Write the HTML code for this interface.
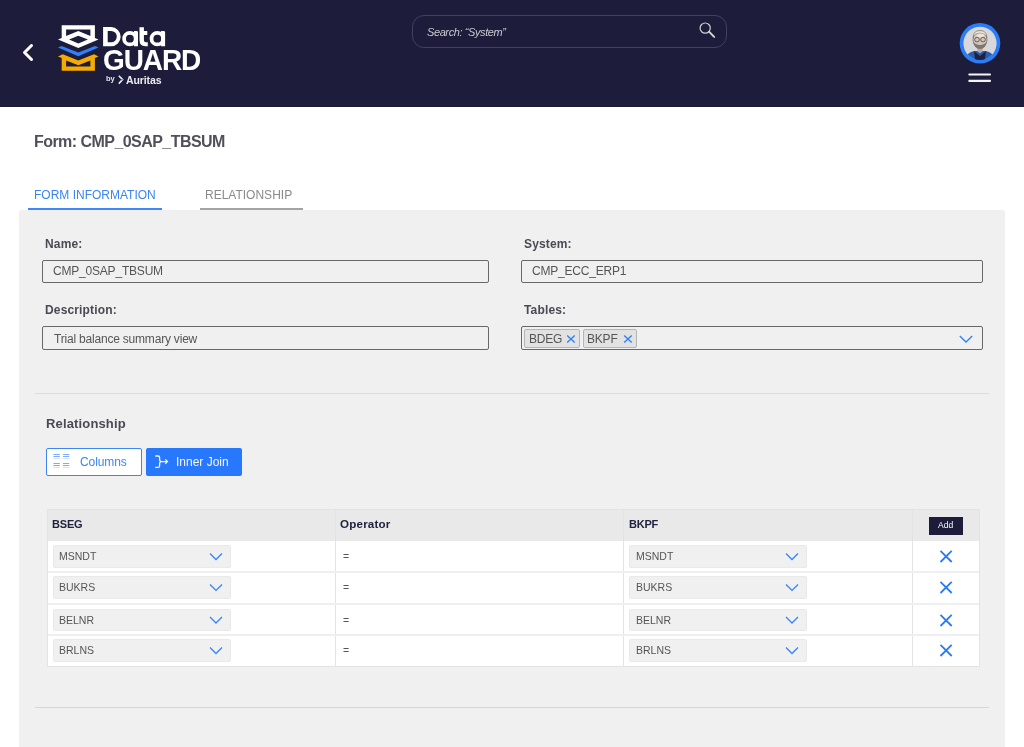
<!DOCTYPE html>
<html><head><meta charset="utf-8">
<style>
*{box-sizing:border-box;margin:0;padding:0}
html,body{width:1024px;height:747px;overflow:hidden;background:#fff;font-family:"Liberation Sans",sans-serif}
.t{will-change:transform}
.a{position:absolute}
.t{position:absolute;line-height:1;white-space:nowrap}
#hdr{left:0;top:0;width:1024px;height:107px;background:#1d1d3b;border-bottom:1px solid #19193a}
#panel{left:19px;top:210px;width:986px;height:560px;background:#f0f0f0;border-radius:3px 3px 0 0}
.lbl{font-size:12px;font-weight:bold;color:#4a4a55;letter-spacing:0.15px}
.inp{position:absolute;height:23.6px;border:1px solid #686868;border-radius:2px;background:#f0f0f0}
.itx{font-size:12px;color:#555;letter-spacing:-0.2px}
.hr{position:absolute;height:1px;background:#dcdcdc}
.btn{position:absolute;top:448px;height:28px;width:96px;border-radius:2px}
.th{font-size:11.6px;font-weight:bold;color:#20223f}
.sel{position:absolute;height:22.4px;width:178px;background:#f0f0f0;border:1px solid #e9e9e9;border-radius:2px}
.stx{font-size:10.5px;color:#555}
</style></head><body>
<div id="hdr" class="a"></div>
<!-- back chevron -->
<svg class="a" style="left:0;top:0" width="240" height="107" viewBox="0 0 240 107">
  <polyline points="31.5,45.5 24.5,52.5 31.5,59.5" fill="none" stroke="#fff" stroke-width="3" stroke-linecap="round" stroke-linejoin="round"/>
  <path fill="#fff" fill-rule="evenodd" d="M61.7,25.2 H94.9 V37.9 L98.5,39.5 L78.3,48 L58,39.5 L61.7,37.9 Z M66.1,29.6 H90.4 V36.1 L78.3,31 L66.1,36.1 Z M69.1,39.5 L78.3,35.8 L87.9,39.5 L78.3,43.6 Z"/>
  <path fill="#2f80fa" d="M58,47.6 L61.5,46 L78.3,52.4 L95,46 L98.5,47.6 L78.3,56.2 Z"/>
  <path fill="#f5ab00" fill-rule="evenodd" d="M58,56.4 L62.8,54.2 L78.3,60.5 L94.1,54.2 L98.5,56.4 L94.9,57.9 V70.8 H61.7 V57.9 Z M66.1,60.6 L78.3,65.2 L90.4,60.6 V66.4 H66.1 Z"/>
</svg>
<svg class="a" style="left:0;top:0" width="240" height="60" viewBox="0 0 240 60"><g fill="#fff">
  <path fill-rule="evenodd" d="M103.1,27.1 H111.1 A9.55,9.55 0 0 1 111.1,46.2 H103.1 Z M107.7,30.9 H111.1 A5.7,5.7 0 0 1 111.1,42.3 H107.7 Z"/>
  <circle cx="129.9" cy="38.65" r="5.8" fill="none" stroke="#fff" stroke-width="3.75"/>
  <path d="M134,31 H136.6 Q138,31 138,32.4 V46.2 H134 Z"/>
  <path d="M139.5,27.2 H143.9 V31.1 H147.3 V35 H143.9 V40.3 Q143.9,42.3 145.9,42.3 H147.8 V46.2 H145.4 Q139.5,46.2 139.5,40.3 Z"/>
  <circle cx="157.3" cy="38.65" r="5.8" fill="none" stroke="#fff" stroke-width="3.75"/>
  <path d="M161.1,31 H163.7 Q165.1,31 165.1,32.4 V46.2 H161.1 Z"/>
</g></svg>
<div class="t" style="left:103px;top:46px;font-size:28px;font-weight:bold;color:#fff;letter-spacing:-1.1px;transform:scaleY(1.055);transform-origin:0 0">GUARD</div>
<div class="t" style="left:105.5px;top:75px;font-size:7.5px;font-weight:bold;color:#e6e6ea;letter-spacing:-0.2px">by</div>
<svg class="a" style="left:116px;top:74px" width="10" height="12"><polyline points="2.8,1.8 6.6,5.6 2.8,9.6" fill="none" stroke="#f0f0f4" stroke-width="1.6"/><circle cx="6" cy="5.6" r="0.9" fill="#3a86ff"/></svg>
<div class="t" style="left:126px;top:75.2px;font-size:10.5px;font-weight:bold;color:#ececf0;letter-spacing:-0.1px">Auritas</div>

<!-- search -->
<div class="a" style="left:411.5px;top:15.4px;width:315.6px;height:32.2px;border:1px solid #404064;border-radius:12px"></div>
<div class="t" style="left:427px;top:26.5px;font-size:11px;font-style:italic;color:#c9c9d2;letter-spacing:-0.4px">Search: “System”</div>
<svg class="a" style="left:690px;top:15px" width="40" height="33">
  <circle cx="15.2" cy="13.1" r="5.1" fill="none" stroke="#d0d0d6" stroke-width="1.2"/>
  <path d="M18.8,16.9 L23.8,22 L24.6,22.3 L24.2,21.4 L19.3,16.4 Z" fill="#d6d6dc" stroke="#d6d6dc" stroke-width="1.1" stroke-linejoin="round"/>
</svg>
<!-- avatar -->
<svg class="a" style="left:955px;top:18px" width="50" height="50">
  <circle cx="25" cy="25.3" r="20.3" fill="#2a7df6"/>
  <circle cx="25" cy="25.3" r="16.6" fill="#d8d8db"/>
  <clipPath id="cp"><circle cx="25" cy="25.3" r="16.6"/></clipPath>
  <g clip-path="url(#cp)">
    <path d="M7,45 Q10,35.5 19,33 L31,33 Q40,35.5 43,45 Z" fill="#2b5cab"/>
    <path d="M19,33 L25,38 L31,33 L29.5,45 L20.5,45 Z" fill="#1d2342"/>
    <path d="M22,28.5 L28,28.5 L27.6,33.2 L25,35.2 L22.4,33.2 Z" fill="#b8ada5"/>
    <ellipse cx="25" cy="21.6" rx="7" ry="8.9" fill="#cfc6bf" stroke="#6e6256" stroke-width="0.7"/>
    <path d="M18.2,19.5 Q18,12.6 25,12.6 Q32,12.6 31.8,19.5 Q31,15.4 25,15.2 Q19,15.4 18.2,19.5 Z" fill="#e9e6e3" stroke="#7a6e62" stroke-width="0.6"/>
    <ellipse cx="25.5" cy="17.4" rx="3.8" ry="2" fill="#f5decf"/>
    <path d="M18.8,24.2 Q19,30.6 25,30.8 Q31,30.6 31.2,24.2 Q29,27.4 25,27 Q21,27.4 18.8,24.2 Z" fill="#7e766f"/>
    <circle cx="22" cy="21.6" r="2.3" fill="none" stroke="#5a4a36" stroke-width="0.8"/>
    <circle cx="28" cy="21.6" r="2.3" fill="none" stroke="#5a4a36" stroke-width="0.8"/>
  </g>
</svg>
<svg class="a" style="left:960px;top:68px" width="40" height="20"><rect x="8.3" y="5.4" width="22.7" height="2.1" rx="1" fill="#f4f4f6"/><rect x="8.3" y="11.8" width="22.7" height="2.1" rx="1" fill="#f4f4f6"/></svg>

<!-- title & tabs -->
<div class="t" style="left:34px;top:134.3px;font-size:16px;font-weight:bold;color:#50505b;letter-spacing:-0.55px">Form: CMP_0SAP_TBSUM</div>
<div class="t" style="left:33.5px;top:188.6px;font-size:12px;color:#3b84f6">FORM INFORMATION</div>
<div class="t" style="left:204.5px;top:188.6px;font-size:12px;color:#8a8a8a">RELATIONSHIP</div>

<div id="panel" class="a"></div>
<div class="a" style="left:28px;top:208px;width:134px;height:2px;background:#3f87f6"></div>
<div class="a" style="left:200px;top:208px;width:102.5px;height:2px;background:#a3a3a3"></div>

<!-- form fields -->
<div class="t lbl" style="left:45px;top:237.8px">Name:</div>
<div class="t lbl" style="left:524px;top:237.8px">System:</div>
<div class="inp" style="left:42px;top:259.6px;width:447px"></div>
<div class="inp" style="left:521px;top:259.6px;width:462px"></div>
<div class="t itx" style="left:53.3px;top:265.3px">CMP_0SAP_TBSUM</div>
<div class="t itx" style="left:532.3px;top:265.3px">CMP_ECC_ERP1</div>

<div class="t lbl" style="left:45px;top:304.2px">Description:</div>
<div class="t lbl" style="left:524px;top:304.2px">Tables:</div>
<div class="inp" style="left:42px;top:326.2px;width:447px;height:23.6px"></div>
<div class="inp" style="left:521px;top:326.2px;width:462px;height:23.6px"></div>
<div class="t itx" style="left:53.5px;top:332.5px">Trial balance summary view</div>

<div class="a" style="left:524px;top:329px;width:56px;height:18.5px;background:#e2e2e2;border:1px solid #b5b5b5;border-radius:2px"></div>
<div class="t itx" style="left:528.5px;top:332.6px">BDEG</div>
<svg class="a" style="left:565px;top:334px" width="11" height="10"><path d="M2.2,1.4 L9.7,8.6 M9.7,1.4 L2.2,8.6" stroke="#2f7ff5" stroke-width="1.35"/></svg>
<div class="a" style="left:582.7px;top:329px;width:54.5px;height:18.5px;background:#e2e2e2;border:1px solid #b5b5b5;border-radius:2px"></div>
<div class="t itx" style="left:586.5px;top:332.6px">BKPF</div>
<svg class="a" style="left:622px;top:334px" width="11" height="10"><path d="M2.2,1.4 L9.7,8.6 M9.7,1.4 L2.2,8.6" stroke="#2f7ff5" stroke-width="1.35"/></svg>
<svg class="a" style="left:958px;top:333px" width="16" height="11"><polyline points="1.8,3 8,9 14.2,3" fill="none" stroke="#2f7ff5" stroke-width="1.3"/></svg>

<div class="hr" style="left:35px;top:393px;width:954px"></div>

<!-- relationship -->
<div class="t" style="left:45.5px;top:417.4px;font-size:13px;font-weight:bold;color:#4a4a55;letter-spacing:0.15px">Relationship</div>
<div class="btn" style="left:46px;background:#fff;border:1px solid #3b86f7"></div>
<svg class="a" style="left:48px;top:450px" width="24" height="22">
  <g stroke-width="1">
    <path d="M5.4,4.5H11.8M5.4,6.5H11.8M15,4.5H21.2M15,6.5H21.2M5.4,13.5H11.8M5.4,15.5H11.8M15,13.5H21.2M15,15.5H21.2" stroke="#7eabf6"/>
    <path d="M5.4,8.5H11.8M15,8.5H21.2M5.4,17.5H11.8M15,17.5H21.2" stroke="#cfe0fb"/>
  </g>
</svg>
<div class="t" style="left:80.4px;top:455.7px;font-size:12px;color:#3b86f7;letter-spacing:-0.1px">Columns</div>
<div class="btn" style="left:146px;background:#2878fe"></div>
<svg class="a" style="left:150px;top:450px" width="24" height="22">
  <path d="M5.2,6 H8.1 Q9.6,6 9.6,7.6 V9.6 Q9.6,11.6 11.6,11.6 H17.3 M5.2,17.3 H8.1 Q9.6,17.3 9.6,15.7 V13.6 Q9.6,11.6 11.6,11.6 M15.3,9.4 L17.5,11.6 L15.3,13.8" fill="none" stroke="#eef4ff" stroke-width="1.3"/>
</svg>
<div class="t" style="left:176.2px;top:455.7px;font-size:12px;color:#f4f7ff;letter-spacing:0px">Inner Join</div>

<!-- table -->
<div class="a" style="left:47px;top:509px;width:933px;height:158px;background:#fff;border:1px solid #e3e3e3"></div>
<div class="a" style="left:48px;top:510px;width:931px;height:31px;background:#e9e9e9"></div>
<div class="a" style="left:335px;top:510px;width:1px;height:156px;background:#e3e3e3"></div>
<div class="a" style="left:623px;top:510px;width:1px;height:156px;background:#e3e3e3"></div>
<div class="a" style="left:912px;top:510px;width:1px;height:156px;background:#e3e3e3"></div>
<div class="a" style="left:48px;top:571.3px;width:931px;height:1.5px;background:#efefef"></div>
<div class="a" style="left:48px;top:603.1px;width:931px;height:1.5px;background:#efefef"></div>
<div class="a" style="left:48px;top:634.3px;width:931px;height:1.5px;background:#efefef"></div>

<div class="t th" style="left:51.6px;top:518.6px;font-size:11px;letter-spacing:-0.2px">BSEG</div>
<div class="t th" style="left:339.6px;top:518.2px;letter-spacing:0.2px">Operator</div>
<div class="t th" style="left:628.8px;top:518.6px;font-size:11px;letter-spacing:-0.2px">BKPF</div>
<div class="a" style="left:929px;top:517px;width:34px;height:18px;background:#1d1d3b"></div>
<div class="t" style="left:938px;top:520.8px;font-size:8.5px;color:#fff">Add</div>

<div class="sel" style="left:52.6px;top:545.4px"></div>
<div class="t stx" style="left:59px;top:551.4px">MSNDT</div>
<svg class="a" style="left:207px;top:551px" width="18" height="12"><polyline points="3,2.6 9,8.6 15,2.6" fill="none" stroke="#3b86f7" stroke-width="1.35"/></svg>
<div class="t stx" style="left:343px;top:551.4px">=</div>
<div class="sel" style="left:629px;top:545.4px"></div>
<div class="t stx" style="left:635.5px;top:551.4px">MSNDT</div>
<svg class="a" style="left:783px;top:551px" width="18" height="12"><polyline points="3,2.6 9,8.6 15,2.6" fill="none" stroke="#3b86f7" stroke-width="1.35"/></svg>
<svg class="a" style="left:938px;top:548.4px" width="16" height="16"><path d="M2.5,2.8 L13.7,14 M13.7,2.8 L2.5,14" stroke="#2a7bf6" stroke-width="1.8"/></svg>
<div class="sel" style="left:52.6px;top:576.2px"></div>
<div class="t stx" style="left:59px;top:582.2px">BUKRS</div>
<svg class="a" style="left:207px;top:582px" width="18" height="12"><polyline points="3,2.4 9,8.4 15,2.4" fill="none" stroke="#3b86f7" stroke-width="1.35"/></svg>
<div class="t stx" style="left:343px;top:582.2px">=</div>
<div class="sel" style="left:629px;top:576.2px"></div>
<div class="t stx" style="left:635.5px;top:582.2px">BUKRS</div>
<svg class="a" style="left:783px;top:582px" width="18" height="12"><polyline points="3,2.4 9,8.4 15,2.4" fill="none" stroke="#3b86f7" stroke-width="1.35"/></svg>
<svg class="a" style="left:938px;top:579.2px" width="16" height="16"><path d="M2.5,2.8 L13.7,14 M13.7,2.8 L2.5,14" stroke="#2a7bf6" stroke-width="1.8"/></svg>
<div class="sel" style="left:52.6px;top:608.8px"></div>
<div class="t stx" style="left:59px;top:614.8px">BELNR</div>
<svg class="a" style="left:207px;top:614px" width="18" height="12"><polyline points="3,3 9,9 15,3" fill="none" stroke="#3b86f7" stroke-width="1.35"/></svg>
<div class="t stx" style="left:343px;top:614.8px">=</div>
<div class="sel" style="left:629px;top:608.8px"></div>
<div class="t stx" style="left:635.5px;top:614.8px">BELNR</div>
<svg class="a" style="left:783px;top:614px" width="18" height="12"><polyline points="3,3 9,9 15,3" fill="none" stroke="#3b86f7" stroke-width="1.35"/></svg>
<svg class="a" style="left:938px;top:611.8px" width="16" height="16"><path d="M2.5,2.8 L13.7,14 M13.7,2.8 L2.5,14" stroke="#2a7bf6" stroke-width="1.8"/></svg>
<div class="sel" style="left:52.6px;top:639.4px"></div>
<div class="t stx" style="left:59px;top:645.4px">BRLNS</div>
<svg class="a" style="left:207px;top:645px" width="18" height="12"><polyline points="3,2.6 9,8.6 15,2.6" fill="none" stroke="#3b86f7" stroke-width="1.35"/></svg>
<div class="t stx" style="left:343px;top:645.4px">=</div>
<div class="sel" style="left:629px;top:639.4px"></div>
<div class="t stx" style="left:635.5px;top:645.4px">BRLNS</div>
<svg class="a" style="left:783px;top:645px" width="18" height="12"><polyline points="3,2.6 9,8.6 15,2.6" fill="none" stroke="#3b86f7" stroke-width="1.35"/></svg>
<svg class="a" style="left:938px;top:642.4px" width="16" height="16"><path d="M2.5,2.8 L13.7,14 M13.7,2.8 L2.5,14" stroke="#2a7bf6" stroke-width="1.8"/></svg>

<div class="hr" style="left:35px;top:707px;width:954px;background:#d6d6d6"></div>

</body></html>
